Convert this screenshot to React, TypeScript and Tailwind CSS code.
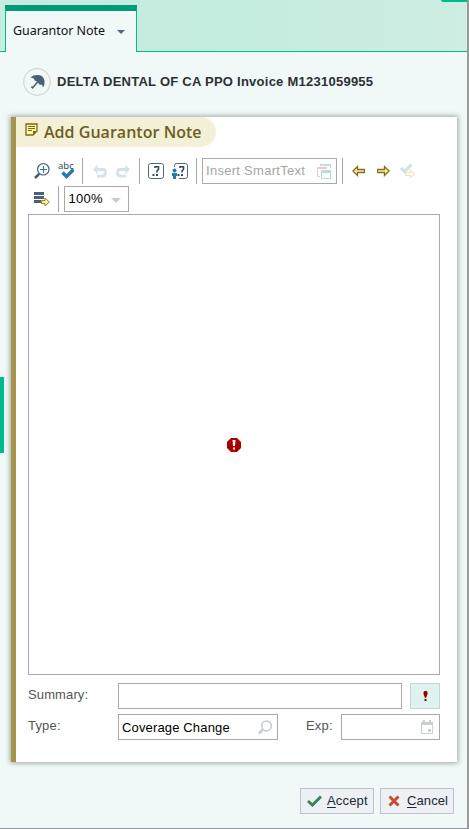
import React from "react";

function Separator() {
  return <div className="h-[26px] w-px shrink-0 bg-[#a6a6a6]" />;
}

function UmbrellaIcon() {
  return (
    <svg className="block h-7 w-7" viewBox="0 0 28 28">
      <circle cx="14" cy="14" r="13.3" fill="none" stroke="#d2d8d7" strokeWidth="1.2" />
      <path d="M7.500 9.500C9.500 7.300 12.500 6.700 15.500 7C19.500 7.500 21.800 10.500 21.500 14.500C21.400 16.500 21 18 20.300 19.300L18.700 16.700L16.700 16.800L14.200 13.800L11.700 12.500L10.800 10.500Z" fill="#4a6178" />
      <path d="M15.500 13L9.600 19.800L8.400 18.600" fill="none" stroke="#4a6178" strokeWidth="1.500" />
    </svg>
  );
}

function NoteIcon() {
  return (
    <svg className="block h-[13px] w-[13px]" viewBox="0 0 13 13">
      <path d="M1 1H12V8L8 12H1Z" fill="#fdf3b4" stroke="#7d6a0c" strokeWidth="1.300" />
      <path d="M12 8H8V12Z" fill="#7d6a0c" />
      <path d="M3 3.500H10M3 5.500H10M3 7.500H7" stroke="#7d6a0c" />
    </svg>
  );
}

function ZoomInIcon() {
  return (
    <svg className="block h-4 w-4" viewBox="0 0 16 16">
      <circle cx="9.300" cy="6.300" r="5.700" fill="#fff" stroke="#4f6479" strokeWidth="1.200" />
      <path d="M9.500 3V10M6 6.500H13" stroke="#2b7da8" strokeWidth="1.200" />
      <path d="M5.200 10.800L1 15" stroke="#465a70" strokeWidth="2.500" />
    </svg>
  );
}

function SpellIcon() {
  return (
    <div className="relative h-[18px] w-4">
      <span className="absolute -top-[2px] left-0 text-[9.500px] leading-3 text-[#34495e] [font-family:'Noto_Sans',sans-serif]">abc</span>
      <svg className="absolute inset-0 h-[18px] w-4" viewBox="0 0 16 18">
        <path d="M4.500 10.500L8.500 14.500L15.500 7.500" fill="none" stroke="#287ba7" strokeWidth="3.400" />
      </svg>
    </div>
  );
}

function UndoIcon({ flip = false }: { flip?: boolean }) {
  return (
    <svg className={flip ? "block h-[13px] w-[14px] -scale-x-100" : "block h-[13px] w-[14px]"} viewBox="0 0 14 13">
      <path d="M0 4.500L4.500 0V3H10C12.500 3 14 4.800 14 7.500C14 10.800 12.300 12.500 9 12.500H4V9.700H8.500C10.300 9.700 11 9 11 7.500C11 6.500 10.500 6 9.200 6H4.500V9Z" fill="#d3e3ec" />
    </svg>
  );
}

function QuestionIcon({ person = false }: { person?: boolean }) {
  return (
    <svg className="block h-4 w-4" viewBox="0 0 16 16">
      {person ? (
        <path d="M2.500 4V2.500Q2.500 .500 4.500 .500H13.500Q15.500 .500 15.500 2.500V13.500Q15.500 15.500 13.500 15.500H7" fill="none" stroke="#52667b" />
      ) : (
        <rect x=".5" y=".5" width="15" height="15" rx="2" fill="none" stroke="#52667b" />
      )}
      <g transform={person ? "translate(1 0)" : undefined} fill="#344a61">
        <path d="M7 5V3.800H10.500V6.300L9 8V9.500" fill="none" stroke="#344a61" strokeWidth="1.600" />
        <rect x="8" y="11" width="2" height="2" />
        <rect x="4.500" y="11" width="2" height="2" />
      </g>
      {person && (
        <g fill="#287ba7">
          <circle cx="2.500" cy="7.500" r="2" />
          <path d="M0 10H5V13H4V16H1V13H0Z" />
        </g>
      )}
    </svg>
  );
}

function WindowsIcon() {
  return (
    <svg className="block h-[15px] w-[14px]" viewBox="0 0 14 15">
      <path d="M3 0H14V4.500H13V2H3Z" fill="#c9ded4" />
      <path d="M0 3H10V5H1V12H3V13H0Z" fill="#f0c9c4" />
      <path d="M4.500 7V14.500H13.500V7" fill="#fff" stroke="#bdd6e4" />
      <rect x="4" y="6" width="10" height="3" fill="#bdd6e4" />
    </svg>
  );
}

function ArrowIcon({ right = false }: { right?: boolean }) {
  return (
    <svg className={right ? "block h-3 w-[13px] -scale-x-100" : "block h-3 w-[13px]"} viewBox="0 0 13 12">
      <path d="M1 6L5.500 1.500V4.500H12.500V7.500H5.500V10.500Z" fill="#fdf0a0" stroke="#84701b" strokeWidth="1.300" />
    </svg>
  );
}

function CheckNextIcon() {
  return (
    <svg className="block h-4 w-4" viewBox="0 0 16 16">
      <path d="M1 5L4.500 8.500L11.500 1.500" fill="none" stroke="#d3e5dc" strokeWidth="3.300" />
      <path d="M5.500 9.500H10V6.800L14.800 11L10 15V12.500H5.500Z" fill="#fdf9e9" stroke="#e9e2ca" />
    </svg>
  );
}

function ListNextIcon() {
  return (
    <svg className="block h-[15px] w-4" viewBox="0 0 16 15">
      <path d="M0 1.500H10M0 5.500H10M0 9.500H7" stroke="#4a6178" strokeWidth="3" />
      <path d="M0 3.500H10M0 7.500H10" stroke="#fff" />
      <path d="M7.500 8.500H11V6L15.300 10L11 14V11.500H7.500Z" fill="#fdf0a0" stroke="#998125" />
    </svg>
  );
}

function SearchIcon() {
  return (
    <svg className="block h-[15px] w-[15px]" viewBox="0 0 15 15">
      <circle cx="8.500" cy="6" r="4.800" fill="none" stroke="#c8cdd6" strokeWidth="1.700" />
      <path d="M5 9.500L1 13.500" stroke="#c8cdd6" strokeWidth="2.600" />
    </svg>
  );
}

function CalendarIcon() {
  return (
    <svg className="block h-[14px] w-3" viewBox="0 0 12 14">
      <path d="M.5 4V13.500H11.500V4" fill="#fff" stroke="#c8cdd6" />
      <path d="M0 2H2V0H4V2H8V0H10V2H12V5H0Z" fill="#c8cdd6" />
      <rect x="7" y="9" width="3" height="3" fill="#c8cdd6" />
    </svg>
  );
}

function Toolbar() {
  return (
    <div className="ml-[18px] mt-[11px]">
      <div className="flex h-[26px] items-center">
        <div className="ml-0"><ZoomInIcon /></div>
        <div className="ml-2"><SpellIcon /></div>
        <div className="ml-2"><Separator /></div>
        <div className="ml-[10px]"><UndoIcon /></div>
        <div className="ml-[9px]"><UndoIcon flip /></div>
        <div className="ml-[9px]"><Separator /></div>
        <div className="ml-2"><QuestionIcon /></div>
        <div className="ml-2"><QuestionIcon person /></div>
        <div className="ml-2"><Separator /></div>
        <div className="ml-[5px] flex h-[26px] w-[135px] items-center justify-between border border-[#a9a9a9] pl-[3px] pr-[5px] text-[#a6a6a6]">
          <span className="whitespace-nowrap tracking-[0.28px]">Insert SmartText</span>
          <WindowsIcon />
        </div>
        <div className="ml-[5px]"><Separator /></div>
        <div className="ml-[9px]"><ArrowIcon /></div>
        <div className="ml-[12px]"><ArrowIcon right /></div>
        <div className="ml-[10px]"><CheckNextIcon /></div>
      </div>
      <div className="mt-[2px] flex h-[26px] items-center">
        <div><ListNextIcon /></div>
        <div className="ml-2"><Separator /></div>
        <div className="ml-[5px] flex h-[26px] w-[65px] items-center justify-between border border-[#a9a9a9] pl-[3.5px] pr-[7px] text-black">
          <span className="text-[13px] tracking-[0.25px]">100%</span>
          <svg className="mt-[2px] h-[5px] w-[10px]" viewBox="0 0 10 5"><path d="M0 0H10L5 5Z" fill="#c8cdd6" /></svg>
        </div>
      </div>
    </div>
  );
}

export default function App() {
  return (
    <div className="flex h-[829px] w-[469px] flex-col overflow-hidden border-b border-b-[#9298a4] bg-[#f0f9f7] text-[13px] [font-family:'Liberation_Sans',Arial,sans-serif]">
      <div className="flex min-h-0 flex-1 border-r-2 border-r-[#999]">
        <div className="relative flex w-[467px] flex-col">
          <div className="absolute left-0 top-[377px] h-[76px] w-1 bg-[#00b98c]" />
          <div className="absolute left-[441px] top-0 h-[2px] w-[26px] rounded-bl-sm bg-[#00b98c]" />
          <header className="flex h-[52px] items-end border-b border-b-[#00b98c] bg-linear-to-r from-[#c8ebe0] via-[#c4ecdf] to-[#ceede3] pl-[5px]">
            <div className="-mb-px flex h-[47px] w-[132px] items-center justify-between border-x border-t-[6px] border-x-[#00b98c] border-t-[#009b74] bg-[#f0f9f7] pl-[7px] pr-[11px] text-[#111] [font-family:'Noto_Sans',sans-serif]">
              <span className="-mt-px whitespace-nowrap text-[12.5px] tracking-[-0.05px]">Guarantor Note</span>
              <svg className="h-1 w-2" viewBox="0 0 8 4"><path d="M0 0H8L4 4Z" fill="#526b80" /></svg>
            </div>
          </header>

          <div className="ml-[23px] mt-4 flex h-7 items-center">
            <UmbrellaIcon />
            <h1 className="ml-[6px] whitespace-nowrap text-[13px] font-bold tracking-[0.25px] text-[#2c3035]">DELTA DENTAL OF CA PPO Invoice M1231059955</h1>
          </div>

          <main className="ml-[11px] mt-[21px] flex h-[645px] w-[446px] flex-col border-l-[5px] border-l-[#a6944a] bg-white shadow-[0_0_5px_1px_#98a7a3]">
            <div className="flex h-[30px] w-[200px] items-center rounded-r-full bg-[#f4f0d7] pl-[9px]">
              <div className="-mt-[5px]"><NoteIcon /></div>
              <h2 className="ml-[6px] whitespace-nowrap text-[16px] font-semibold tracking-[0.03px] text-[#6b601c] [font-family:'Open_Sans','Noto_Sans',sans-serif]">Add Guarantor Note</h2>
            </div>
            <Toolbar />
            <div className="ml-3 mt-[2px] flex h-[461px] w-[412px] shrink-0 items-center justify-center border border-[#a9a9a9]">
              <svg className="h-[14px] w-[14px]" viewBox="0 0 14 14">
                <path d="M4 0H10L14 4V10L10 14H4L0 10V4Z" fill="#a80000" />
                <path d="M5.500 2H8.500L8 8H6Z" fill="#fff" /><rect x="6" y="9.500" width="2" height="2" fill="#fff" />
              </svg>
            </div>
            <div className="ml-3 mt-2 flex h-[26px] w-[412px]">
              <label className="w-[90px] pt-[2px] leading-5 tracking-[0.12px] text-[#555]">Summary:</label>
              <div className="w-[284px] border border-[#a9a9a9]" />
              <div className="ml-2 flex w-[30px] items-center justify-center border border-[#bed9dc] bg-[#e0f2f0]">
                <svg className="h-[10px] w-[5px]" viewBox="0 0 5 10"><path d="M.5 1L1.500 0H3.500L4.500 1V3L3 7H2L.5 3Z" fill="#900" /><rect x="1.500" y="8" width="2" height="2" fill="#900" /></svg>
              </div>
            </div>
            <div className="ml-3 mt-[5px] flex h-[26px] w-[412px]">
              <label className="w-[90px] pt-[2px] leading-5 tracking-[0.2px] text-[#555]">Type:</label>
              <div className="flex w-[160px] items-center justify-between border border-[#a9a9a9] pl-[3px] pr-1 text-black">
                <span className="mt-px tracking-[0.15px]">Coverage Change</span><SearchIcon />
              </div>
              <label className="ml-7 w-[35px] pt-[2px] leading-5 tracking-[0.2px] text-[#555]">Exp:</label>
              <div className="flex w-[99px] items-center justify-end border border-[#a9a9a9] pr-[6px]"><CalendarIcon /></div>
            </div>
          </main>

          <footer className="ml-[300px] mt-[26px] flex h-[26px] gap-[6px] text-[#202832]">
            <button className="flex w-[74px] items-center border border-[#bdc3cd] bg-[#edf0f4] pl-[6px]">
              <svg className="h-3 w-[15px]" viewBox="0 0 15 12"><path d="M1 6L5.500 10L14 1.500" fill="none" stroke="#32855d" strokeWidth="3" /></svg>
              <span className="ml-[5px] tracking-[0.15px]"><u className="underline-offset-2">A</u>ccept</span>
            </button>
            <button className="flex w-[74px] items-center border border-[#bdc3cd] bg-[#edf0f4] pl-[7px]">
              <svg className="h-3 w-3" viewBox="0 0 12 12"><path d="M1.500 1.500L10.500 10.500M10.500 1.500L1.500 10.500" stroke="#c64e2e" strokeWidth="3" /></svg>
              <span className="ml-[7px] tracking-[0.1px]"><u className="underline-offset-2">C</u>ancel</span>
            </button>
          </footer>
        </div>
      </div>
    </div>
  );
}
